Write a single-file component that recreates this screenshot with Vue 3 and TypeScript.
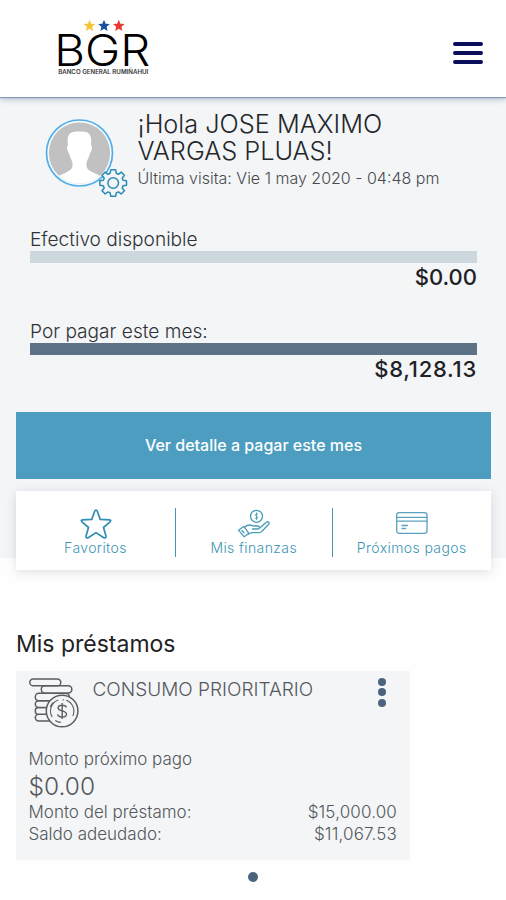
<script setup lang="ts">
interface Balance { label: string; amount: string; tone: string }
interface Row { label: string; value: string }

const balances: Balance[] = [
  { label: 'Efectivo disponible', amount: '$0.00', tone: 'light' },
  { label: 'Por pagar este mes:', amount: '$8,128.13', tone: 'dark' },
]
const loanRows: Row[] = [
  { label: 'Monto del préstamo:', value: '$15,000.00' },
  { label: 'Saldo adeudado:', value: '$11,067.53' },
]
const star = 'M0 -8.6 L2.5 -2.8 L8.8 -2.2 L4 2 L5.4 8.2 L0 5 L-5.4 8.2 L-4 2 L-8.8 -2.2 L-2.5 -2.8Z'
</script>

<template>
  <div class="app">
    <header class="header">
      <svg class="logo" width="96" height="60" viewBox="0 0 96 60">
        <path :d="star" transform="translate(34.5 8.5) scale(.66)" fill="#f6c437" />
        <path :d="star" transform="translate(49 8.5) scale(.66)" fill="#1b4fa0" />
        <path :d="star" transform="translate(63.8 8.5) scale(.66)" fill="#e63a30" />
        <text class="brand" x="-.8" y="49.2" textLength="96" lengthAdjust="spacingAndGlyphs">BGR</text>
        <text class="tagline" x="3.2" y="57.3" textLength="90" lengthAdjust="spacingAndGlyphs">BANCO GENERAL RUMIÑAHUI</text>
      </svg>
      <button class="menu" aria-label="Menú"><i /><i /><i /></button>
    </header>

    <section class="hero">
      <div class="profile">
        <div class="avatar">
          <svg width="84" height="90" viewBox="0 0 84 90">
            <defs><clipPath id="face"><circle cx="34.5" cy="43" r="30.6" /></clipPath></defs>
            <circle cx="34.5" cy="43" r="33" fill="#f5fafd" stroke="#50aee8" stroke-width="1.7" />
            <g clip-path="url(#face)">
              <path d="M0 0H80V90H0Z" fill="#c1c1c1" />
              <path d="M23 35C21 22 27 21.500 34.500 21.500S47.500 22 46 35C47.500 36 47 42 45 43C44 48 42 50 41.500 53C41 59 43 60 49 63C56 66 61 68 62 76H7C8 68 13 66 20 63C26 60 28 59 27.500 53C27 50 25 48 24 43C22 42 21.500 36 23 35Z" fill="#fff" />
            </g>
            <g transform="translate(68.200 73)" fill="#f3f5f7" stroke="#2b8bb5" stroke-width="1.500" stroke-linejoin="round">
              <path d="M-2.400-13.300H2.400L3.100-9.700L5.300-8.700L8-10.900L11.200-7.700L9-4.900L9.900-2.700L13.300-2.200V2.300L9.900 2.800L9 5L11.200 7.800L8 11L5.300 8.900L3.100 9.800L2.400 13.300H-2.400L-3.100 9.800L-5.300 8.900L-8 11L-11.200 7.800L-9 5L-9.900 2.800L-13.300 2.300V-2.200L-9.900-2.700L-9-4.900L-11.200-7.700L-8-10.900L-5.300-8.700L-3.100-9.700Z" />
              <circle r="5.300" />
            </g>
          </svg>
        </div>
        <div>
          <h1 class="hello">¡Hola JOSE MAXIMO<br />VARGAS PLUAS!</h1>
          <p class="visit">Última visita: Vie 1 may 2020 - 04:48 pm</p>
        </div>
      </div>

      <div class="balances">
        <div v-for="b in balances" :key="b.label">
          <p class="label">{{ b.label }}</p>
          <div class="bar" :class="b.tone" />
          <p class="amount" :class="b.tone">{{ b.amount }}</p>
        </div>
      </div>

      <button class="detail">Ver detalle a pagar este mes</button>

      <nav class="quick">
        <a class="item">
          <svg width="34" height="32" viewBox="0 0 34 32" fill="none" stroke="#2f8fb0" stroke-width="1.700" stroke-linejoin="round">
            <path d="M17 2.200Q17.900 2.200 18.300 3.200L21.200 11.400L30.500 11.800Q32.700 12.200 31 13.900L24.500 19.500L27 28.200Q27 30.500 24.800 29.700L17 24.600L9.200 29.700Q7 30.500 7 28.200L9.500 19.500L3 13.900Q1.300 12.200 3.500 11.800L12.800 11.400L15.700 3.200Q16.100 2.200 17 2.200Z" />
          </svg>
          <span>Favoritos</span>
        </a>
        <a class="item">
          <svg width="34" height="32" viewBox="0 0 34 32" fill="none" stroke="#4a9cb9" stroke-width="1.300" stroke-linejoin="round" stroke-linecap="round">
            <circle cx="19.500" cy="8.300" r="6" />
            <path d="M20.800 6.300C19.500 5.300 18 6 18.400 7.200C18.700 8.300 20.700 8 20.700 9.600C20.600 10.900 19 11 18.100 10.200M19.500 5V11.700" stroke-width=".900" />
            <path d="M1.500 22.200L6.700 18.400L12 25.300L7.200 28.800ZM5 22.500L7 24.800" />
            <path d="M7.500 19.300C10.500 16.500 13.500 16.600 16 18H20.800C23.300 18.300 22.900 20.800 20.800 21H15.500M23 19.800L29.300 14.200C31.300 13.100 33 14.500 31.700 16.200L24.500 23.700Q23.300 24.700 21.500 24.700H15L11.500 26" />
          </svg>
          <span>Mis finanzas</span>
        </a>
        <a class="item">
          <svg width="34" height="32" viewBox="0 0 34 32" fill="none" stroke="#58a2bf" stroke-width="1.300" stroke-linecap="round">
            <rect x="1.700" y="4.700" width="30.300" height="20.600" rx="2.500" />
            <path d="M1.700 9.400H32M1.700 13.200H32M7 17.500H12.500M7 20.500H10.500" />
          </svg>
          <span>Próximos pagos</span>
        </a>
      </nav>
    </section>

    <section class="loans">
      <h2>Mis préstamos</h2>
      <article class="loan">
        <div class="loan-head">
          <svg width="52" height="52" viewBox="0.7 1 52 52" fill="#f3f5f7" stroke="#5b5e61" stroke-width="1.500">
            <rect x="7" y="37.200" width="30" height="6.800" rx="3.400" />
            <rect x="7" y="30.500" width="30" height="6.700" rx="3.300" />
            <rect x="7" y="23.700" width="30" height="6.800" rx="3.400" />
            <rect x="7" y="16.200" width="34" height="7.500" rx="3.500" />
            <rect x="13" y="8.800" width="30.500" height="7.300" rx="3.500" />
            <rect x="1.500" y="2" width="31" height="6.800" rx="3.400" />
            <circle cx="33.800" cy="34" r="15.800" />
            <path d="M23.900 40A11.600 11.600 0 0 1 30 23M25 25.300A12.500 12.500 0 0 0 22 30M38 23.200A11.600 11.600 0 0 1 44.500 39M32.500 45.500A11.600 11.600 0 0 1 27 43.500M35 22.300V23.500M32 44.500V45.800" fill="none" stroke-width="1.100" />
            <path d="M38 30.300C37.500 27.800 30 27 29.800 31C29.800 34.800 38.300 33 38.200 37.200C38 41 29.800 40.500 29.300 37.300M33.900 26V42" fill="none" stroke-width="1.400" />
          </svg>
          <h3>CONSUMO PRIORITARIO</h3>
          <button class="more" aria-label="Opciones"><i /><i /><i /></button>
        </div>
        <p class="line">Monto próximo pago</p>
        <p class="next">$0.00</p>
        <div v-for="r in loanRows" :key="r.label" class="line row">
          <span>{{ r.label }}</span><span class="value">{{ r.value }}</span>
        </div>
      </article>
      <div class="pager"><i /></div>
    </section>
  </div>
</template>

<style>
body { background: #fefefe; }
</style>

<style scoped>
.app { height: 900px; overflow: hidden; font-family: Inter, 'Liberation Sans', sans-serif; font-weight: 300; color: #303236; }
h1, h2, h3, p { margin: 0; font-weight: 300; }
button { border: 0; padding: 0; background: none; font-family: inherit; }
svg { display: block; flex: none; }

.header { position: relative; display: flex; justify-content: space-between; box-sizing: border-box; height: 97px; padding: 17px 23px 0 55px; background: #fff; box-shadow: 0 1px 1px #8799bd, 0 3px 5px rgba(110, 130, 160, .4); }
.brand { font-size: 44px; fill: #000; }
.tagline { font-size: 5.500px; font-weight: 600; fill: #333; }
.menu { display: flex; flex-direction: column; gap: 5px; align-self: flex-start; margin-top: 25px; }
.menu i { width: 30px; height: 4px; border-radius: 2px; background: #0a0f5c; }

.hero { display: flow-root; background: #f3f5f7; }
.profile { display: flex; gap: 8.500px; padding: 13px 16px 0 45px; }
.hello { font-size: 25.300px; line-height: 27px; color: #25272a; }
.visit { margin-top: 4px; font-size: 16px; line-height: 20px; color: #484a4e; }
.balances { display: flex; flex-direction: column; gap: 30px; padding: 28px 29px 0 30px; }
.label { font-size: 19.100px; line-height: 23px; }
.bar { height: 12px; margin-bottom: 1px; }
.bar.light { background: #cdd8de; }
.bar.dark { background: #5d7287; }
.amount { font-size: 22px; line-height: 26px; font-weight: 500; text-align: right; color: #1f2124; }
.amount.dark { letter-spacing: .75px; }
.detail { display: block; width: 475px; height: 67px; margin: 30px 0 12px 16px; padding-bottom: 1.500px; background: #4c9dbf; color: #fff; font-size: 16px; font-weight: 500; }
.quick { display: grid; grid-template-columns: 159px 156.500px 159.500px; width: 475px; height: 79px; margin: 0 0 -12px 16px; background: #fff; box-shadow: 0 2px 10px rgba(60, 70, 80, .16); }
.item { display: flex; flex-direction: column; align-items: center; height: 49px; margin-top: 17px; color: #3c95b4; font-size: 14px; line-height: 16px; letter-spacing: .4px; white-space: nowrap; }
.item + .item { border-left: 1.500px solid #4795b5; }

.loans { padding: 72px 16px 0; }
.loans h2 { font-size: 23px; line-height: 28px; font-weight: 400; color: #1f2124; }
.loan { box-sizing: border-box; width: 393.500px; height: 189px; margin-top: 13px; padding: 7px 12.500px 0; background: #f3f5f7; color: #55585c; }
.loan-head { display: flex; height: 70px; }
.loan h3 { flex: 1; margin-left: 12px; font-size: 19px; line-height: 24px; }
.more { display: flex; flex-direction: column; gap: 2.300px; align-self: flex-start; margin-right: 11px; }
.more i { width: 8px; height: 8px; border-radius: 50%; background: #4b647d; }
.line { font-size: 17px; line-height: 22px; }
.next { margin: 1.500px 0 1px; font-size: 24.500px; line-height: 28px; }
.row { display: flex; justify-content: space-between; }
.value { letter-spacing: .15px; }
.pager { display: flex; justify-content: center; padding-top: 12px; }
.pager i { width: 10px; height: 10px; border-radius: 50%; background: #4b647d; }
</style>
